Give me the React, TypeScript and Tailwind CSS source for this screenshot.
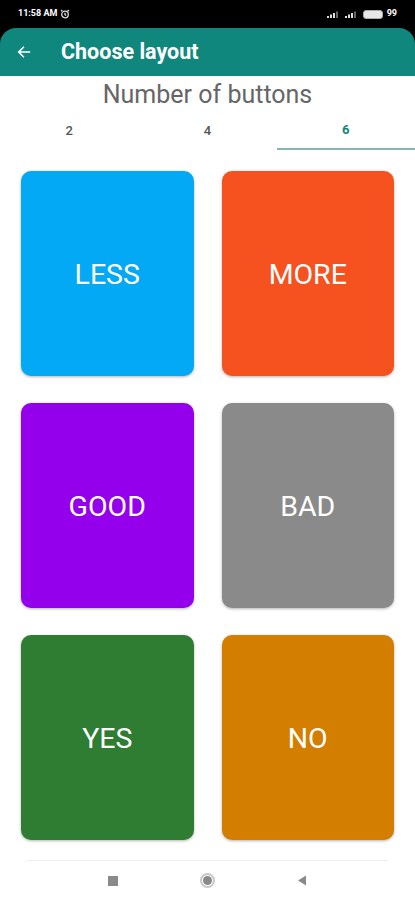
import React from "react";

const cards = [
  { label: "LESS", bg: "bg-[#03a9f4]" },
  { label: "MORE", bg: "bg-[#f5521f]" },
  { label: "GOOD", bg: "bg-[#9500ec]" },
  { label: "BAD", bg: "bg-[#8a8a8a]" },
  { label: "YES", bg: "bg-[#2e7d32]" },
  { label: "NO", bg: "bg-[#d47e00]" },
];

export default function App() {
  return (
    <div className="w-[415px] h-[900px] bg-white overflow-hidden flex flex-col" style={{ fontFamily: "Roboto, 'Noto Sans', sans-serif" }}>
      {/* status bar */}
      <div className="h-[28px] bg-black flex items-center justify-between px-[18px] text-white">
        <div className="flex items-center gap-[3px] text-[9px] font-bold">
          <span>11:58 AM</span>
          <svg width="10" height="10" viewBox="0 0 10 10" fill="none" stroke="#ddd" strokeWidth="1.3">
            <circle cx="5" cy="5.5" r="3.3" />
            <path d="M5 3.8V5.6L6.2 6.4M1 2.2L2.4 1M9 2.2L7.6 1" />
          </svg>
        </div>
        <div className="flex items-center gap-[4px] text-[9px] font-bold">
          <svg width="14" height="8" viewBox="0 0 14 8" fill="#ddd">
            <rect x="0" y="6" width="2" height="2" />
            <rect x="3" y="4.5" width="2" height="3.5" />
            <rect x="6" y="3" width="2" height="5" />
            <rect x="9" y="1.5" width="2" height="6.5" fill="#666" />
          </svg>
          <svg width="14" height="8" viewBox="0 0 14 8" fill="#ddd">
            <rect x="0" y="6" width="2" height="2" />
            <rect x="3" y="4.5" width="2" height="3.5" />
            <rect x="6" y="3" width="2" height="5" />
            <rect x="9" y="1.5" width="2" height="6.5" fill="#666" />
          </svg>
          <div className="w-[20px] h-[9px] rounded-[3px] bg-[#e8e8e8] border border-[#aaa]" />
          <span>99</span>
        </div>
      </div>
      {/* app bar */}
      <div className="bg-black">
        <div className="h-[48px] bg-[#0f877c] rounded-t-[16px] flex items-center text-white">
          <svg className="ml-[16px]" width="16" height="16" viewBox="0 0 24 24" fill="none" stroke="white" strokeWidth="2.4" strokeLinecap="square">
            <path d="M20 12H5M11 5l-7 7 7 7" />
          </svg>
          <span className="ml-[29px] text-[21.5px] font-bold">Choose layout</span>
        </div>
      </div>
      {/* title */}
      <div className="h-[36px] pt-[2px] flex items-center justify-center text-[25px] text-[#666666]">Number of buttons</div>
      {/* tabs */}
      <div className="grid grid-cols-3 h-[38px]">
        <div className="flex items-center justify-center text-[13px] text-[#555] font-medium">2</div>
        <div className="flex items-center justify-center text-[13px] text-[#555] font-medium">4</div>
        <div className="flex items-center justify-center text-[13px] text-[#0f877c] font-bold border-b-2 border-[#84b7b1]">6</div>
      </div>
      {/* grid */}
      <div className="px-[21px] pt-[21px] grid grid-cols-2 gap-x-[28px] gap-y-[27px]">
        {cards.map((c) => (
          <div key={c.label} className={`${c.bg} h-[205px] rounded-[10px] shadow-[0_1px_3px_rgba(0,0,0,0.3)] flex items-center justify-center text-white text-[28.5px] pt-[4px]`}>
            {c.label}
          </div>
        ))}
      </div>
      {/* nav bar */}
      <div className="mt-[20px] mx-[27px] border-t border-[#eeeeee] h-[39px] flex items-center justify-center">
        <div className="flex items-center gap-[82px] mt-[1px]">
          <div className="w-[10px] h-[10px] bg-[#8a8a8a]" />
          <div className="w-[15px] h-[15px] rounded-full border-[2px] border-[#c8c8c8] flex items-center justify-center">
            <div className="w-[9px] h-[9px] rounded-full bg-[#8a8a8a]" />
          </div>
          <svg width="10" height="11" viewBox="0 0 10 11" fill="#8a8a8a">
            <path d="M9 0.5V10.5L1 5.5Z" />
          </svg>
        </div>
      </div>
    </div>
  );
}
